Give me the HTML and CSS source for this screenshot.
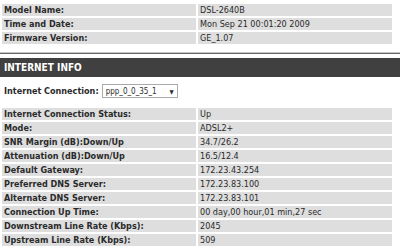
FILE: index.html
```html
<!DOCTYPE html>
<html lang="en">
<head>
    <meta charset="UTF-8">
    <title>Device Info</title>
    <link rel="stylesheet" href="styles.css">
</head>
<body>
    <table class="info-table">
        <tr><td class="label">Model Name:</td><td>DSL-2640B</td></tr>
        <tr><td class="label">Time and Date:</td><td>Mon Sep 21 00:01:20 2009</td></tr>
        <tr><td class="label">Firmware Version:</td><td>GE_1.07</td></tr>
    </table>

    <div class="separator"></div>

    <div class="section-title">INTERNET INFO</div>

    <div class="conn-row">
        <span class="label">Internet Connection:</span>
        <div class="select-box">
            <span>ppp_0_0_35_1</span>
            <span class="arrow">&#9660;</span>
        </div>
    </div>

    <table class="info-table">
        <tr><td class="label">Internet Connection Status:</td><td>Up</td></tr>
        <tr><td class="label">Mode:</td><td>ADSL2+</td></tr>
        <tr><td class="label">SNR Margin (dB):Down/Up</td><td>34.7/26.2</td></tr>
        <tr><td class="label">Attenuation (dB):Down/Up</td><td>16.5/12.4</td></tr>
        <tr><td class="label">Default Gateway:</td><td>172.23.43.254</td></tr>
        <tr><td class="label">Preferred DNS Server:</td><td>172.23.83.100</td></tr>
        <tr><td class="label">Alternate DNS Server:</td><td>172.23.83.101</td></tr>
        <tr><td class="label">Connection Up Time:</td><td>00 day,00 hour,01 min,27 sec</td></tr>
        <tr><td class="label">Downstream Line Rate (Kbps):</td><td>2045</td></tr>
        <tr><td class="label">Upstream Line Rate (Kbps):</td><td>509</td></tr>
    </table>
</body>
</html>
```

FILE: styles.css
```css
body {
    font-family: "DejaVu Sans Condensed", "DejaVu Sans", sans-serif;
    font-size: 9px;
    color: #2a2a2a;
    background: #fff;
    margin: 0;
    padding-top: 2px;
}
.info-table {
    width: 394px;
    border-collapse: separate;
    border-spacing: 2px;
}
.info-table td {
    width: 50%;
    height: 12px;
    padding: 0 2px;
    line-height: 12px;
    background-color: #dedede;
    white-space: nowrap;
}
.label {
    font-weight: bold;
}
.separator {
    margin-top: 6px;
    height: 1px;
    border-top: 1px solid #c8c8c8;
    background-color: #666;
}
.section-title {
    margin-top: 4px;
    height: 19px;
    line-height: 19px;
    padding-left: 4px;
    background-color: #404040;
    color: #fff;
    font-weight: bold;
    font-size: 10px;
}
.conn-row {
    display: flex;
    align-items: center;
    gap: 3px;
    margin-top: 7px;
    padding-left: 4px;
    height: 14px;
}
.select-box {
    display: flex;
    align-items: center;
    justify-content: space-between;
    width: 68px;
    height: 12px;
    padding: 0 3px;
    border: 1px solid #aaa;
    font-size: 8px;
}
.arrow {
    font-size: 6px;
}
.conn-row + .info-table {
    margin-top: 8px;
}
```
